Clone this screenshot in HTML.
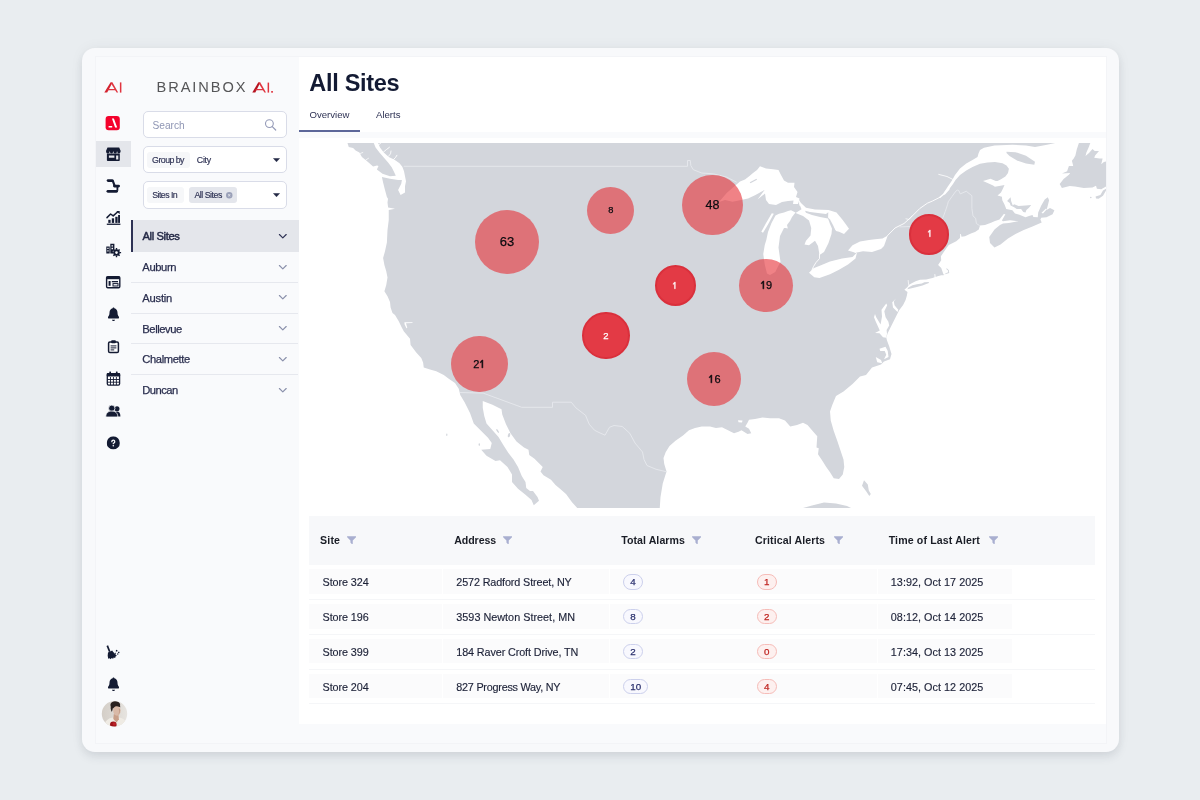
<!DOCTYPE html>
<html lang="en">
<head>
<meta charset="utf-8">
<title>All Sites</title>
<style>
*{box-sizing:border-box;margin:0;padding:0}
html,body{width:1200px;height:800px;overflow:hidden}
body{background:#e9edf0;font-family:"Liberation Sans",sans-serif;color:#1d2340;position:relative}
#wrap{position:absolute;left:0;top:0;width:1200px;height:800px;will-change:transform}
.abs{position:absolute}
#card{left:82px;top:48px;width:1037px;height:704px;border-radius:13px;background:#f8f9fb;box-shadow:0 5px 10px rgba(40,50,70,.10),0 0 14px rgba(40,50,70,.05)}
#frame{left:95px;top:56px;width:1012px;height:688px;background:#f9fafc;border:1px solid #f3f4f7}
#rail-active{left:96px;top:140.5px;width:35px;height:26.5px;background:#e4e6eb}
#logo{left:156.5px;top:78.6px;font-size:14.6px;letter-spacing:1.95px;color:#555557;white-space:nowrap;line-height:16px}
.box{position:absolute;left:143px;width:143.5px;height:27px;border:1px solid #d9dce8;border-radius:5px;background:#fff}
.chip{-webkit-text-stroke:.15px #2e3254;position:absolute;height:15.5px;border-radius:3px;font-size:8px;line-height:17.6px;color:#2e3254;white-space:nowrap;text-align:left}
.sline{position:absolute;left:131px;width:167px;height:1px;background:#e6e8ee}
#head{left:298.6px;top:57px;width:807.6px;height:75px;background:#fff}
#body{left:298.6px;top:137.6px;width:807.6px;height:586.4px;background:#fff}
#title{left:309.3px;top:68.5px;font-size:23.5px;font-weight:bold;color:#131a33;line-height:28px;white-space:nowrap;letter-spacing:-.3px}
.tab{position:absolute;top:108.5px;font-size:9.6px;line-height:12px;color:#2e3254;white-space:nowrap}
#map{left:298px;top:143px;width:808px;height:365px;overflow:hidden}
.c{position:absolute;border-radius:50%;text-align:center;font-size:11px;color:#0c0c10;-webkit-text-stroke:.25px currentColor}
#thead{left:309px;top:516.2px;width:786px;height:48.7px;background:#f7f8fa}
.th{position:absolute;top:534px;font-size:10.6px;font-weight:bold;color:#1a1d26;line-height:13px;white-space:nowrap}
.cell{position:absolute;height:24.4px;background:#fbfbfc}
.rl{position:absolute;left:309px;width:786px;height:1px;background:#f5f6f8}
.td{-webkit-text-stroke:.15px #1d2238;position:absolute;font-size:11px;color:#1d2238;line-height:13px;white-space:nowrap}
.bd{position:absolute;height:15.6px;border-radius:8px;font-size:9.8px;line-height:13.8px;text-align:center;-webkit-text-stroke:.25px currentColor}
.bb{border:1px solid #ccd0ec;background:#f8f8fe;color:#2b316e}
.br{border:1px solid #f6bcb8;background:#fdf0ef;color:#bf2420}
</style>
</head>
<body>
<div id="wrap">
<div id="card" class="abs"></div>
<div id="frame" class="abs"></div>
<div id="rail-active" class="abs"></div>
<div id="rail">
<svg class="abs" style="left:95px;top:56px" width="40" height="688" viewBox="95 56 40 688">
<g>
<path d="M104.3 92.6 L110.5 82.4 L112.5 82.4 L107.2 92.6 Z" fill="#d3222f"/>
<path d="M110.5 82.4 L112.5 82.4 L118.2 92.6 L116.6 92.6 Z" fill="#e0343f"/>
<path d="M107.6 89.0 L115.4 89.0 L116.0 90.2 L106.9 90.2 Z" fill="#e0343f"/>
<rect x="119.9" y="82.4" width="1.5" height="10.2" fill="#e0343f"/>
</g>
<rect x="105.6" y="116" width="14.2" height="14.2" rx="3" fill="#f4022c"/>
<path d="M108.6 126.1h3.6v1.5h-3.6z M111.9 118.6h2.0l3.3 9h-2.1z" fill="#fff"/>
<g fill="#141b33">
<path d="M107.5 147.4H119.2L120.7 151.0A1.84 2.6 0 0 1 117.03 151.0A1.84 2.6 0 0 1 113.35 151.0A1.84 2.6 0 0 1 109.68 151.0A1.84 2.6 0 0 1 106 151.0Z"/>
<path d="M106.9 153.5h12.9v6.4c0 .7-.5 1.200-1.200 1.200h-10.500c-.7 0-1.200-.5-1.200-1.200z M108.9 155.600v2.100h5.500v-2.100z M116.100 155.600v3.800h2.200v-3.800z" fill-rule="evenodd"/>
</g>
<g fill="none" stroke="#141b33" stroke-width="2.8" stroke-linecap="round" stroke-linejoin="round">
<path d="M108.1 180.6H112.2"/><path d="M114.4 186.1H118.6"/><path d="M107.9 191.3H116.6"/>
<path d="M112.9 181.2L114.4 185.2" stroke-width="2.2"/><path d="M117.4 186.8V190.8" stroke-width="1.8" stroke-linecap="butt"/>
</g>
<g fill="#141b33">
<rect x="106.800" y="223.600" width="13.600" height="1.300"/>
<rect x="108.300" y="219.800" width="2.300" height="3.100"/>
<rect x="111.800" y="218.300" width="2.300" height="4.600"/>
<rect x="115.300" y="216.800" width="2.300" height="6.100"/>
<rect x="118.100" y="215.000" width="1.900" height="7.900"/>
<path d="M107.0 217.600l3.600-3.600 2.600 1.900 4.600-4.100" fill="none" stroke="#141b33" stroke-width="1.500" stroke-linejoin="round" stroke-linecap="round"/>
<path d="M116.300 210.900h3.400v3.400z"/>
</g>
<g fill="#141b33">
<path d="M106.300 246.600h3.400v6.800h-3.400z M107.300 247.800v1.300h1.300v-1.300z M107.300 250.200v1.300h1.300v-1.300z" fill-rule="evenodd"/>
<path d="M110.300 243.800h4.100v6.000l-1.600 1.400v2.200h-2.500z M111.500 245.200v1.400h1.500v-1.400z M111.500 247.800v1.400h1.500v-1.400z" fill-rule="evenodd"/>
<circle cx="116.500" cy="252.600" r="2.300" fill="none" stroke="#141b33" stroke-width="1.900"/>
<path d="M115.800 248.000h1.400v1.800h-1.400z M115.800 255.400h1.400v1.800h-1.400z M111.900 251.900h1.800v1.400h-1.800z M119.300 251.900h1.800v1.400h-1.800z" />
<path d="M112.900 249.900l1.000-1.000 1.300 1.300-1.000 1.000z M119.100 248.900l1.000 1.000-1.300 1.300-1.000-1.000z M112.900 255.300l1.300-1.300 1.000 1.000-1.300 1.300z M120.100 255.300l-1.000 1.000-1.300-1.300 1.000-1.000z"/>
</g>
<g>
<rect x="106.600" y="276.600" width="13.200" height="11.200" rx="1.200" fill="none" stroke="#141b33" stroke-width="1.400"/>
<rect x="106.600" y="276.600" width="13.200" height="2.600" fill="#141b33"/>
<rect x="108.600" y="281.000" width="2.000" height="4.800" fill="#141b33"/>
<rect x="111.800" y="281.000" width="6.200" height="1.300" fill="#141b33"/>
<rect x="113.000" y="283.600" width="5.000" height="2.400" fill="none" stroke="#141b33" stroke-width="1.000"/>
</g>
<svg x="107.9" y="307.2" width="11.2" height="13.8" viewBox="0 0 448 512" preserveAspectRatio="none" ><path fill="#141b33" d="M224 0c-17.7 0-32 14.3-32 32v3.2C119 50 64 114.6 64 192v21.7c0 48.1-16.4 94.8-46.4 132.4l-9.8 12.2C2.7 364.6 0 372.4 0 380.5 0 400.1 15.9 416 35.5 416h376.9c19.6 0 35.5-15.9 35.5-35.5 0-8.1-2.7-15.9-7.8-22.2l-9.8-12.2c-29.9-37.6-46.3-84.3-46.3-132.4V192c0-77.4-55-142-128-156.8V32c0-17.7-14.3-32-32-32m-62 464c7.1 27.6 32.2 48 62 48s54.9-20.4 62-48z"/></svg>
<g>
<rect x="108.600" y="342.000" width="9.800" height="10.600" rx="1.300" fill="#fff" stroke="#141b33" stroke-width="1.500"/>
<rect x="111.200" y="340.200" width="4.600" height="3.000" rx="0.800" fill="#141b33"/>
<rect x="110.600" y="345.400" width="5.800" height="1.000" fill="#141b33"/>
<rect x="110.600" y="347.400" width="5.800" height="1.000" fill="#141b33"/>
<rect x="110.600" y="349.400" width="3.600" height="1.000" fill="#141b33"/>
</g>
<g>
<rect x="107.300" y="373.600" width="12.300" height="11.500" rx="1.300" fill="#fff" stroke="#141b33" stroke-width="1.300"/>
<rect x="106.700" y="373.000" width="13.500" height="3.600" rx="1.000" fill="#141b33"/>
<rect x="109.300" y="371.600" width="1.700" height="2.600" rx=".5" fill="#141b33"/><rect x="115.900" y="371.600" width="1.700" height="2.600" rx=".5" fill="#141b33"/>
<path d="M107.500 379.500h12M107.500 382.200h12M110.500 377v8M113.450 377v8M116.400 377v8" stroke="#141b33" stroke-width=".9" fill="none"/>
</g>
<g fill="#141b33">
<circle cx="117.000" cy="408.800" r="2.500"/>
<path d="M113.500 416.600c0-3.400 1.500-5.000 3.600-5.000s3.300 1.600 3.300 5.000z"/>
<g stroke="#f9fafc" stroke-width=".8"><circle cx="111.800" cy="408.300" r="3.200"/>
<path d="M105.800 417.000c0-4.000 2.300-5.900 6.000-5.900s6.000 1.900 6.000 5.900z"/></g>
</g>
<svg x="106.7" y="436.3" width="13.2" height="13.2" viewBox="0 0 512 512" preserveAspectRatio="none" ><path fill="#141b33" d="M256 512a256 256 0 1 0 0-512 256 256 0 1 0 0 512m0-336c-17.7 0-32 14.3-32 32 0 13.3-10.7 24-24 24s-24-10.7-24-24c0-44.2 35.8-80 80-80s80 35.8 80 80c0 47.2-36 67.2-56 74.5v3.8c0 13.3-10.7 24-24 24s-24-10.7-24-24v-8.1c0-20.5 14.8-35.2 30.1-40.2 6.4-2.1 13.2-5.5 18.2-10.3 4.3-4.2 7.7-10 7.7-19.6 0-17.7-14.3-32-32-32zm-32 192a32 32 0 1 1 64 0 32 32 0 1 1-64 0"/></svg>
<g fill="#141b33">
<path d="M106.500 645.900l1.600-.7 2.400 6.200-1.600.7z"/>
<path d="M108.000 652.400l4.200-1.900 .8 1.300 3.800 4.000-1.300.7-.3 1.400-1.500-.5-.6 1.300-1.500-.6-.9 1.100-1.100-.9-1.400.4-.5-3.000z"/>
<rect x="115.900" y="650.000" width="1.500" height="1.500" transform="rotate(20 116.6 650.700)"/><rect x="118.100" y="651.800" width="1.300" height="1.300"/><rect x="117.100" y="653.400" width="1.200" height="1.200"/><rect x="114.900" y="652.800" width="1.000" height="1.000"/>
</g>
<svg x="107.9" y="677.2" width="11.2" height="13.8" viewBox="0 0 448 512" preserveAspectRatio="none" ><path fill="#141b33" d="M224 0c-17.7 0-32 14.3-32 32v3.2C119 50 64 114.6 64 192v21.7c0 48.1-16.4 94.8-46.4 132.4l-9.8 12.2C2.7 364.6 0 372.4 0 380.5 0 400.1 15.9 416 35.5 416h376.9c19.6 0 35.5-15.9 35.5-35.5 0-8.1-2.7-15.9-7.8-22.2l-9.8-12.2c-29.9-37.6-46.3-84.3-46.3-132.4V192c0-77.4-55-142-128-156.8V32c0-17.7-14.3-32-32-32m-62 464c7.1 27.6 32.2 48 62 48s54.9-20.4 62-48z"/></svg>
<defs><clipPath id="av"><circle cx="114.5" cy="713.7" r="12.7"/></clipPath>
<linearGradient id="avbg" x1="0" x2="1"><stop offset="0" stop-color="#d3cdc6"/><stop offset=".55" stop-color="#dedad5"/><stop offset="1" stop-color="#e9e6e2"/></linearGradient></defs>
<g clip-path="url(#av)">
<rect x="101" y="700" width="28" height="28" fill="url(#avbg)"/>
<path d="M104 728c0-6.500 3.500-9.600 8.600-10.600l3.600 2.600 3.300-2.400c4.800 1.000 7.800 4.400 7.800 10.400z" fill="#efebe4"/>
<path d="M113.800 714.000h4.600l.5 5.200-2.400 3.300-3.200-3.500z" fill="#c9a08a"/>
<ellipse cx="115.300" cy="704.900" rx="4.900" ry="3.700" fill="#2a2220"/>
<path d="M111.300 705.000c-1.000 2.000-.8 5.000.6 7.000l1.300-5.000z" fill="#2a2220"/>
<ellipse cx="116.900" cy="710.700" rx="3.700" ry="5.000" fill="#d9b9a7"/>
<path d="M112.600 707.000c1.000-3.000 6.500-3.500 8.000.3-2.600-1.300-5.300-1.400-8.000-.3z" fill="#2a2220"/>
<path d="M118.600 708.500c.8 1.600.8 4.500-.6 6.600 1.800-1.300 2.600-4.000 1.900-6.000z" fill="#c39d88"/>
<circle cx="113.300" cy="724.800" r="3.300" fill="#9c1218"/>
<circle cx="114.300" cy="723.900" r="1.700" fill="#bb2026"/>
</g>
</svg>
</div>
<div id="side">
<div id="logo" class="abs">BRAINBOX</div>
<svg class="abs" style="left:250px;top:78px" width="28" height="18" viewBox="250 78 28 18">
<path d="M252.300 92.600 L258.200 82.600 L260.300 82.600 L255.300 92.600 Z" fill="#b5121f"/>
<path d="M258.200 82.600 L260.300 82.600 L266.000 92.600 L264.400 92.600 Z" fill="#e0343f"/>
<path d="M255.800 89.000 L263.200 89.000 L263.900 90.200 L255.100 90.200 Z" fill="#e0343f"/>
<rect x="267.600" y="82.600" width="1.500" height="10.000" fill="#e0343f"/>
<rect x="271.200" y="91.000" width="1.700" height="1.700" fill="#e0343f"/>
</svg>
<div class="box" style="top:111px"></div>
<div class="abs" style="left:152.600px;top:118.500px;font-size:10.2px;line-height:13px;color:#8f96b4;letter-spacing:-.05px">Search</div>
<svg class="abs" style="left:264px;top:118px" width="14" height="14" viewBox="0 0 14 14"><circle cx="5.400" cy="5.600" r="3.900" fill="none" stroke="#959bb8" stroke-width="1.100"/><path d="M8.300 8.600l3.400 3.400" stroke="#959bb8" stroke-width="1.200" stroke-linecap="round"/></svg>
<div class="box" style="top:146px;height:27.400px"></div>
<div class="chip" style="left:147px;top:152.300px;width:43px;background:#f6f7f9;padding-left:5.100px;font-size:8.8px;letter-spacing:-0.542px">Group by</div>
<div class="chip" style="left:196.800px;top:152.300px;font-size:8.8px;letter-spacing:-0.252px">City</div>
<svg class="abs" style="left:272.900px;top:157.8px" width="7" height="4.500" viewBox="0 0 7 4.5"><path d="M0.500 0.500h6l-3 3.300z" fill="#232845" stroke="#232845" stroke-width=".5" stroke-linejoin="round"/></svg>
<div class="box" style="top:181px;height:27.500px"></div>
<div class="chip" style="left:147px;top:187.300px;width:36.500px;background:#f6f7f9;padding-left:5.200px;font-size:8.8px;letter-spacing:-0.55px">Sites In</div>
<div class="chip" style="left:189px;top:187.300px;width:47.500px;background:#e4e6ec;padding-left:5.400px;font-size:8.8px;letter-spacing:-0.486px">All Sites</div>
<svg class="abs" style="left:226.400px;top:192.200px" width="6.500" height="6.500" viewBox="0 0 512 512"><path fill="#9aa0b8" d="M256 512a256 256 0 1 0 0-512 256 256 0 1 0 0 512m-89-345c9.4-9.4 24.6-9.4 33.9 0l55 55 55-55c9.4-9.4 24.6-9.4 33.9 0s9.4 24.6 0 33.9l-55 55 55 55c9.4 9.4 9.4 24.6 0 33.9s-24.6 9.4-33.9 0l-55-55-55 55c-9.4 9.4-24.6 9.4-33.9 0s-9.4-24.6 0-33.9l55-55-55-55c-9.4-9.4-9.4-24.6 0-33.9"/></svg>
<svg class="abs" style="left:272.900px;top:193.0px" width="7" height="4.500" viewBox="0 0 7 4.5"><path d="M0.500 0.500h6l-3 3.300z" fill="#232845" stroke="#232845" stroke-width=".5" stroke-linejoin="round"/></svg>
<div class="abs" style="left:131px;top:220.400px;width:167.6px;height:31.200px;background:#e4e6eb"></div>
<div class="abs" style="left:131px;top:220.400px;width:2.300px;height:31.200px;background:#2e3254"></div>
<div class="abs" style="left:142.5px;top:229px;font-size:11.2px;letter-spacing:-0.382px;line-height:14px;white-space:nowrap;color:#2e3254;color:#232845;-webkit-text-stroke:.45px #232845;">All Sites</div>
<svg class="abs" style="left:277.500px;top:232.5px" width="10" height="7" viewBox="0 0 10 7"><path d="M1.400 1.500l3.400 3.400 3.400-3.400" fill="none" stroke="#2e3254" stroke-width="1.150" stroke-linecap="round" stroke-linejoin="round"/></svg>
<div class="abs" style="left:142.3px;top:260px;font-size:11.2px;letter-spacing:-0.363px;line-height:14px;white-space:nowrap;color:#2e3254;-webkit-text-stroke:.25px #2a2e4e;color:#2a2e4e;">Auburn</div>
<svg class="abs" style="left:277.500px;top:263.5px" width="10" height="7" viewBox="0 0 10 7"><path d="M1.400 1.500l3.400 3.400 3.400-3.400" fill="none" stroke="#8a90ab" stroke-width="1.150" stroke-linecap="round" stroke-linejoin="round"/></svg>
<div class="abs" style="left:142.3px;top:291px;font-size:11.2px;letter-spacing:-0.226px;line-height:14px;white-space:nowrap;color:#2e3254;-webkit-text-stroke:.25px #2a2e4e;color:#2a2e4e;">Austin</div>
<svg class="abs" style="left:277.500px;top:294.3px" width="10" height="7" viewBox="0 0 10 7"><path d="M1.400 1.500l3.400 3.400 3.400-3.400" fill="none" stroke="#8a90ab" stroke-width="1.150" stroke-linecap="round" stroke-linejoin="round"/></svg>
<div class="abs" style="left:142.3px;top:322px;font-size:11.2px;letter-spacing:-0.423px;line-height:14px;white-space:nowrap;color:#2e3254;-webkit-text-stroke:.25px #2a2e4e;color:#2a2e4e;">Bellevue</div>
<svg class="abs" style="left:277.500px;top:325.0px" width="10" height="7" viewBox="0 0 10 7"><path d="M1.400 1.500l3.400 3.400 3.400-3.400" fill="none" stroke="#8a90ab" stroke-width="1.150" stroke-linecap="round" stroke-linejoin="round"/></svg>
<div class="abs" style="left:142.3px;top:352px;font-size:11.2px;letter-spacing:-0.381px;line-height:14px;white-space:nowrap;color:#2e3254;-webkit-text-stroke:.25px #2a2e4e;color:#2a2e4e;">Chalmette</div>
<svg class="abs" style="left:277.500px;top:355.8px" width="10" height="7" viewBox="0 0 10 7"><path d="M1.400 1.500l3.400 3.400 3.400-3.400" fill="none" stroke="#8a90ab" stroke-width="1.150" stroke-linecap="round" stroke-linejoin="round"/></svg>
<div class="abs" style="left:142.3px;top:383px;font-size:11.2px;letter-spacing:-0.521px;line-height:14px;white-space:nowrap;color:#2e3254;-webkit-text-stroke:.25px #2a2e4e;color:#2a2e4e;">Duncan</div>
<svg class="abs" style="left:277.500px;top:386.5px" width="10" height="7" viewBox="0 0 10 7"><path d="M1.400 1.500l3.400 3.400 3.400-3.400" fill="none" stroke="#8a90ab" stroke-width="1.150" stroke-linecap="round" stroke-linejoin="round"/></svg>
<div class="sline" style="top:282.3px"></div>
<div class="sline" style="top:313.2px"></div>
<div class="sline" style="top:343.3px"></div>
<div class="sline" style="top:374px"></div>
</div>
<div id="head" class="abs"></div>
<div id="body" class="abs"></div>
<div id="title" class="abs">All Sites</div>
<div class="tab" style="left:309.5px">Overview</div>
<div class="tab" style="left:376px">Alerts</div>
<div class="abs" style="left:298.6px;top:130.3px;width:61.4px;height:1.7px;background:#5d6799"></div>
<div id="map" class="abs">
<svg width="808" height="365" viewBox="298 143 808 365" style="display:block">
<g fill="#d3d6dc">
<polygon points="378.1,143 1055.25,143 1047,144.75 1035,147 1026,145.5 1012.5,144.75 994.5,145.5 984,147.75 980,150 978.5,153.5 977.5,157 972.5,160 966.25,163.5 960,168.5 955,175 952,180.5 947.5,187 944,192.5 948.5,190 953,184 955.5,180 960,175 966.25,170.6 972.5,166.9 980,163.75 987.5,162.5 995,161.9 1002.5,163.3 1006.5,165.5 1008.9,168.75 1008,173.1 1005.4,176.6 1001,179.25 997.5,181 995.75,181 990.5,178.8 983,181 987,182.75 993.1,185.4 994.9,186.7 1001.9,185.4 1004.5,184.9 1003.2,188 1001,192.4 997.5,195.4 1001.9,196.75 1002.3,200.25 1004.5,204.6 1006.25,209 1012.4,210.3 1015,213.4 1019.4,214.7 1025.5,217.3 1029,216 1032.5,215.1 1033.4,216.9 1037.75,217.3 1038.2,212.5 1041.25,205.5 1044.75,199.4 1047.8,197.2 1049.1,200.25 1047.8,205.5 1046.5,209.9 1050,208.1 1054.4,210.3 1052.6,214.25 1046.5,217.3 1041.25,217.75 1040.4,219.5 1041.7,222.6 1032.5,226.5 1023.75,230 1015.5,234 1008,238.5 1000.5,244.5 994.5,247.5 990,243 989.25,237 994.5,229.5 1000,225 1003,223.4 1008.9,223 1018.5,221.25 1010,220.3 1003,221.2 1001.9,220.4 1005.4,214.25 1003.8,214 999.5,219.5 995,221 991,222.75 985,225 980,225.6 978.75,229.4 975,231.9 971.5,233.3 968.75,234.4 965,236.25 961.5,236.8 960.9,233.9 960.2,234 960,238.1 956.25,241.25 951.25,243.75 948.75,245 946.9,247.5 943.75,251.9 940.9,256.25 941.2,260.3 938.1,265 941.25,268.1 942.8,272.5 943.5,274.4 946,274 949.2,273 948.9,270.2 946.8,268.2 946.2,268.9 948,270.6 948.2,272.3 945.8,273.2 943.6,275.2 941.25,275.2 937.5,276.25 935.6,277 935.2,274 934.5,274 934.6,277.3 932.5,278.1 926.25,279.4 920,279.7 915.6,281.25 911.25,283.4 908.75,285 907.5,286.9 904.4,289.7 907.5,291.9 906.9,295.6 905.6,300 903.1,305 899,310.5 896,316.5 892.25,324 887.75,333 886.25,337.5 887,340.5 889.25,346.5 891.5,354 890,359.25 884,361.5 881,364.5 872,367.5 866,375 860,376.5 852.5,384 843.5,391.5 836,396 832.25,405 830,411.5 830.75,420.5 833.75,431 837.5,441.5 840.5,450.5 843.5,459.5 844.25,467 842.75,474.5 839,479 833.75,478.25 830,472.25 826.25,467 822.5,461 818,454.25 818.75,448.25 816.5,447.5 817.25,436.25 812,430.25 807.5,425 803,422.75 797,425 790.25,426.5 785,420.5 779,418.25 770,418.25 762.5,417.5 755,419 749,419.75 747.5,422.75 745.25,426.5 749,428.75 751.25,433.25 747.5,434 741.5,430.25 738.5,431.75 734,433.25 728,430.25 722,427.25 716,428 710,426.5 701.75,426.5 695,428 689,430.25 683,435.5 675.5,440.75 669.5,446 665.75,452 663.5,458 664.25,464 666.5,471.5 662.75,483.5 660.5,497 659.75,508 577.25,508 572,502.25 566,494 560,488.75 555.5,485 551,479.75 543.5,475.25 540.5,471.5 542.75,467 539,463.25 534.5,458.75 529.25,455 528.5,449.75 524,447.5 516.5,441.5 510.5,433.25 506,424.25 502.25,414.5 501.5,409.25 492.5,404.75 482.75,401 482.75,407.75 484.25,416 486.5,423.5 492.5,430.25 498.5,437 503,444.5 508.25,452.75 513.5,459.5 518,467 521.75,476 525.5,482 526.25,488 530,491 533,491 537.5,497 539,500.75 533.75,505.25 531.5,500 525.5,494.75 518,488.75 512,482 512,474.5 507.5,467 500,460.25 495.5,461 486.5,455.75 481.25,449.75 490.25,449 491.75,443 488,437.75 480.5,430.25 473.75,423.5 470,413 464.75,402.5 460.25,395 458.75,388.75 455,383.1 448.75,378.75 443.75,375 436.25,371.25 430,369.4 423.75,367.5 423.1,362.5 421.25,358.1 416.25,352.5 410.6,345 410,338.75 403.75,331.25 401.5,327 398.75,321.25 395,315 392.5,313.1 390.6,307.5 390,301.9 387.5,296.25 384.4,291.25 386.25,285 387.5,277.5 386.25,271.25 384.4,265 383.1,258.1 385,251.25 386.9,242.5 387.5,230 388.75,220 388.75,210 395,208.75 388.1,207.5 387.5,202.5 388,198.75 386.9,196.9 385,190 383.1,182.5 381.9,176.9 390,178.75 398.1,180 401.9,180 401.25,183.75 398.1,190 400.6,195 405,192.5 405,186.25 406,181.25 405,176.25 404,171.25 402.3,166.7 399.5,163.3 394.5,159.7 388.75,156.9 383.75,152.5 380,147.5"/>
<polygon points="347.5,143 373.75,143 375.6,147.5 379.4,152.5 383.75,157.5 388.5,163 391.7,167.3 394.2,172.3 395.8,175.8 390,176.25 382.5,173.75 376.9,169.6 378.5,166 377,165.5 373.1,166.6 370,163.75 366.25,160.6 361.9,156.9 359.4,152.5 355.6,150.6 353.1,148.1 348.75,146.9"/>
<polygon points="907.3,289.2 908.4,287.5 912.5,285.2 916.9,284.3 921.9,283.6 924.4,282.2 928.75,282 928.9,282.9 926.25,283.9 922.5,285.4 916.9,287 910.6,288.5"/>
<polygon points="1007.1,201.1 1010.6,197.2 1011.1,201.1 1012.8,205.5 1014.1,204.2 1018.5,205.9 1025.5,205.5 1031.2,205.1 1029,207.7 1026.4,209.9 1025.5,212.5 1023.3,212.1 1021.1,209 1016.75,209 1014.1,207.25 1010.6,205.5 1009.75,202.9"/>
<polygon points="1006.5,151.8 1015.5,152.2 1026,155.8 1035,161.8 1034.3,164.7 1026,163.5 1017,160.5 1009.5,156 1006.5,153"/>
<polygon points="1078.9,143 1090.3,143 1088.6,147.6 1086.4,152.4 1085.5,155.9 1089,152.9 1092.5,148.9 1094.7,151.1 1099,151.1 1095.1,155.5 1094.25,157.7 1099.5,158.6 1102.6,158.6 1101.25,164.25 1103.9,162 1106,161.6 1106,186.6 1101.25,189.2 1096.9,188.75 1096,185.7 1092.5,187.4 1083.75,187.9 1075,186.6 1069.75,186.1 1061.9,187.9 1059.7,183.9 1063.6,179.1 1068.9,174.75 1070.2,173 1061.9,173.4 1067.1,171.25 1068.9,166 1073.25,166 1071.9,160.75 1073.7,158.6 1075.4,155.5 1076.75,149.4"/>
<polygon points="1095.6,196.6 1100.4,194.9 1103,190.5 1106,188.75 1106,190.5 1103,195.75 1098.6,198.8 1096,198.4"/>
<polygon points="803,508 812,505.5 824,502.5 836,503.5 847,506 851,508"/>
<polygon points="864,480.2 867.8,484.5 868.8,490.5 870.8,494 869.3,496 866.3,491.5 862,485.75"/>
<ellipse cx="509" cy="435.2" rx="1.1" ry="2.2" transform="rotate(15 509 435.2)"/><ellipse cx="497.6" cy="431" rx=".7" ry="2.2" transform="rotate(-35 497.6 431)"/><ellipse cx="479.3" cy="444.6" rx=".7" ry="1.4"/><ellipse cx="446.8" cy="434.8" rx=".6" ry="1.2"/><circle cx="1090.8" cy="197.5" r=".8"/>
</g>
<g fill="#fff">
<polygon points="719,202 726.7,193 733,187.5 740,181.5 745,179.5 749.5,176 753,173 757,170 760,166.2 766,168.5 773,169.2 778.5,170 781,175 784,180.5 788,182.8 794.5,182.8 794,187 797.5,192 796,197 799.5,198.5 798,204 793,204 793.5,200.5 788,201 782,202 776,205 769,204 766,200 765,193.5 757.5,199.5 764.5,190 755,195.2 748,198.5 740,200.3 732.5,201.75 725,200"/>
<polygon points="788,211 791,210.3 795.5,212.6 792,217 790,221 787,225 787.8,228.5 785.6,228 784,228 780,236 778.5,247.5 779.75,256.5 780.5,262 778.25,266 775.25,272 770,275 767,273.5 764.75,264.5 763.25,254 764.75,245 766.3,240 768,232 771.5,223 775.5,215.5 779,213.8 784,212.6"/>
<polygon points="771.8,213.3 773.8,213.8 768,224.5 763,232.8 761.3,231.8 765.8,223.5"/>
<polygon points="795.5,213 801.5,209.25 800,205.5 798.5,199.5 801,203 806,207.75 815,209.5 828.5,210 836.5,212.5 842.3,219.5 846,224.5 849,228.75 844,234 839,231.75 836,231 832.25,225.5 831.5,234 828.5,243 824,252 819.5,255 818,246 815,240.75 809,245.25 804.5,244.5 806,240.75 810.5,235.5 811.25,228 809,220.5 803,216"/>
<polygon points="809,272.75 813.5,268.25 821,265.25 830,261.5 842,258.5 852.5,257 857,252.5 855.5,258.5 848,264.5 839,269.75 830,274.25 819.5,278 814.25,277.25"/>
<polygon points="848,250.5 852.5,245.25 860,241.5 869,240 875,239.25 882.5,238.5 887.75,235.5 884,246 881,249 872,252 863,251.25 855.5,252.75"/>
<polygon points="404.4,322.2 412.5,322.2 412.5,323 406,323.2 407.3,328 406.5,328.3 404.6,324.5"/>
<polygon points="886.25,337.8 883,337.3 879.5,333.3 875,332.9 879.8,330.6 875.6,321.3 874,317.25 875,314 876.2,317.25 880.6,324.5 882,316.5 881.5,309.75 886.25,303.5 887.2,305.25 884.3,311.25 885.6,317.25 888.4,321.75 889.2,325.5 886.6,330 887,333.75"/>
<polygon points="896,298.5 892.25,302.25 893,307.5 897.5,312 898.25,309.75 894.5,305.25 893.75,301.5"/>
<polygon points="879.5,348.75 885.5,346.8 887.75,351 888.5,357 884,359.25 886.25,354.75 884.75,351 880.25,351"/>
<polygon points="875.75,357 881,360 882.2,363.3 877.25,362.25"/>
<polygon points="738,420.3 742.5,420.5 742,422.5 738.5,422.3"/>
<polygon points="1041.5,212.8 1046,208.5 1046.8,209.3 1043,213.6"/>
</g>
<g fill="#d3d6dc">
<polygon points="749.75,182.25 756.5,178.8 757,179.8 750.5,183.2"/>
<polygon points="805,210.7 810,212 818,213 826,214 828.3,212.3 828,218.5 820,217 812,215 806,212.8"/>
<polygon points="827.5,217 830,219.5 833.5,226 835.5,231 833,231 830,224"/>
</g>
<g fill="none" stroke="#fff" stroke-linecap="round" stroke-linejoin="round">
<polyline stroke-width="0.9" points="887.5,235.6 895,228 904,223.5 910.75,217.5 915.25,213 919.75,208.5 927.25,203.25 932.5,201 940,197.25"/>
<polyline stroke-width="1.5" points="940,197.25 944.5,193.5"/>
<polyline stroke-width="2.2" points="944.5,193.5 948.5,189"/>
<polyline stroke-width="0.7" points="906,218.8 909,219.5 912,216"/>
<polyline stroke-width="0.8" points="953,179.5 947,176.5 938.75,174.4"/>
<polyline stroke-width="0.9" points="819.5,254 819.5,258.5 816,262.5 813.5,266.5 812,270"/>
<polyline stroke-width="0.8" points="856,252.8 853,250.8"/>
<polyline stroke-width="0.9" points="798.5,199.5 800,205.5"/>
<polyline stroke-width="0.9" points="383.5,152 386.5,149.5 389.4,147.3"/>
<polyline stroke-width="0.9" points="393.5,159.5 395.5,157.5 396.9,155.3"/>
<polyline stroke-width="0.8" points="388.5,156.3 390.5,153.8 391,151"/>
<polyline stroke-width="0.8" points="378.3,145 380.5,143.5"/>
<polyline stroke-width="0.7" points="366,159.8 368.5,158.3"/>
<polyline stroke-width="0.7" points="360,153.6 362.8,152.5"/>
<polyline stroke-width="0.7" points="908.6,284.5 908.2,280.5"/>
</g>
<g fill="none" stroke="#e7e9ed" stroke-width="0.9" stroke-linejoin="round">
<polyline points="403.75,166.3 687.5,166.3 687.5,160.5 690.3,160.5 690.8,165.5 693.3,169.7 701.7,173 713.3,173.8 726.7,177.2 736.7,182.2"/>
<polyline points="460,392.5 483.1,393.1 521.75,407.3 552.5,407.3 552.5,402.2 571.25,402.2 575.75,407.75 585.5,415.25 589.25,424.25 594.5,430.25 599,432.5 605,435.2 609.5,427.25 614,425.5 622.25,426.5 629.75,433.25 635,443 642.5,452 644,459.5 647,465.5 656,469.25 666.5,471.8"/>
<polyline points="899.5,226.9 915,226.3 938,225.8 943,217.5 945.25,211.5 947.5,204.75 948.25,201.75 952,196.5 955.75,191.25 957.25,190.1 958.75,190.5 960.25,193.9 966.25,191.25 971.9,195.75 971.9,208.5 973,216 975.6,218.25 976.4,223.5 979.75,225.75"/>
</g>
</svg>
<div class="c" style="left:177px;top:66.75px;width:64px;height:64px;line-height:64px;font-size:13px;background:rgba(230,46,54,.6);color:#0b0b0f;">63</div>
<div class="c" style="left:289.3px;top:43.5px;width:47px;height:47px;line-height:47px;font-size:9.3px;background:rgba(230,46,54,.6);color:#0b0b0f;">8</div>
<div class="c" style="left:384.2px;top:31.9px;width:60.6px;height:60.6px;line-height:60.6px;font-size:12.5px;background:rgba(230,46,54,.6);color:#0b0b0f;">48</div>
<div class="c" style="left:441.1px;top:115.7px;width:53.6px;height:53.6px;line-height:53.6px;font-size:11px;background:rgba(230,46,54,.6);color:#0b0b0f;"><svg style="display:inline-block;vertical-align:baseline;overflow:visible" width="6.12" height="7.88" viewBox="0 0 556 716"><path fill="currentColor" stroke="currentColor" stroke-width="45" stroke-linejoin="round" d="M272 0H350V716H262V160C220 205 165 238 110 258V172C185 140 245 75 272 0Z"/></svg>9</div>
<div class="c" style="left:153px;top:192.7px;width:56.8px;height:56.8px;line-height:56.8px;font-size:11px;background:rgba(230,46,54,.6);color:#0b0b0f;">2<svg style="display:inline-block;vertical-align:baseline;overflow:visible" width="6.12" height="7.88" viewBox="0 0 556 716"><path fill="currentColor" stroke="currentColor" stroke-width="45" stroke-linejoin="round" d="M272 0H350V716H262V160C220 205 165 238 110 258V172C185 140 245 75 272 0Z"/></svg></div>
<div class="c" style="left:389.4px;top:208.6px;width:54px;height:54px;line-height:54px;font-size:11px;background:rgba(230,46,54,.6);color:#0b0b0f;"><svg style="display:inline-block;vertical-align:baseline;overflow:visible" width="6.12" height="7.88" viewBox="0 0 556 716"><path fill="currentColor" stroke="currentColor" stroke-width="45" stroke-linejoin="round" d="M272 0H350V716H262V160C220 205 165 238 110 258V172C185 140 245 75 272 0Z"/></svg>6</div>
<div class="c" style="left:356.5px;top:122.1px;width:41px;height:41px;line-height:37px;font-size:9.5px;background:#e33a45;border:2px solid #da303c;color:#fff;"><svg style="display:inline-block;vertical-align:baseline;overflow:visible" width="5.28" height="6.80" viewBox="0 0 556 716"><path fill="currentColor" stroke="currentColor" stroke-width="45" stroke-linejoin="round" d="M272 0H350V716H262V160C220 205 165 238 110 258V172C185 140 245 75 272 0Z"/></svg></div>
<div class="c" style="left:284.1px;top:168.7px;width:47.8px;height:47.8px;line-height:43.8px;font-size:9.5px;background:#e33a45;border:2px solid #da303c;color:#fff;">2</div>
<div class="c" style="left:610.9px;top:71px;width:40.6px;height:40.6px;line-height:36.6px;font-size:9.5px;background:#e33a45;border:2px solid #da303c;color:#fff;"><svg style="display:inline-block;vertical-align:baseline;overflow:visible" width="5.28" height="6.80" viewBox="0 0 556 716"><path fill="currentColor" stroke="currentColor" stroke-width="45" stroke-linejoin="round" d="M272 0H350V716H262V160C220 205 165 238 110 258V172C185 140 245 75 272 0Z"/></svg></div>
</div><!--/map-->
<div id="table">
<div id="thead" class="abs"></div>
<div class="th" style="left:320px;letter-spacing:0.187px">Site</div>
<svg class="abs" style="left:346.5px;top:535.300px" width="9.200" height="9.200" viewBox="0 0 512 512" preserveAspectRatio="none"><path fill="#a9afd0" d="M32 64C19.1 64 7.4 71.8 2.4 83.8s-2.2 25.7 7 34.8L192 301.3V416c0 8.5 3.4 16.6 9.4 22.6l64 64c9.2 9.2 22.9 11.9 34.9 6.9S320 492.9 320 480V301.3l182.6-182.6c9.2-9.2 11.9-22.9 6.9-34.9S492.9 64 480 64z"/></svg>
<div class="th" style="left:454.2px;letter-spacing:-0.069px">Address</div>
<svg class="abs" style="left:502.8px;top:535.300px" width="9.200" height="9.200" viewBox="0 0 512 512" preserveAspectRatio="none"><path fill="#a9afd0" d="M32 64C19.1 64 7.4 71.8 2.4 83.8s-2.2 25.7 7 34.8L192 301.3V416c0 8.5 3.4 16.6 9.4 22.6l64 64c9.2 9.2 22.9 11.9 34.9 6.9S320 492.9 320 480V301.3l182.6-182.6c9.2-9.2 11.9-22.9 6.9-34.9S492.9 64 480 64z"/></svg>
<div class="th" style="left:621.2px;letter-spacing:0.066px">Total Alarms</div>
<svg class="abs" style="left:691.8px;top:535.300px" width="9.200" height="9.200" viewBox="0 0 512 512" preserveAspectRatio="none"><path fill="#a9afd0" d="M32 64C19.1 64 7.4 71.8 2.4 83.8s-2.2 25.7 7 34.8L192 301.3V416c0 8.5 3.4 16.6 9.4 22.6l64 64c9.2 9.2 22.9 11.9 34.9 6.9S320 492.9 320 480V301.3l182.6-182.6c9.2-9.2 11.9-22.9 6.9-34.9S492.9 64 480 64z"/></svg>
<div class="th" style="left:755px;letter-spacing:0.105px">Critical Alerts</div>
<svg class="abs" style="left:834.1px;top:535.300px" width="9.200" height="9.200" viewBox="0 0 512 512" preserveAspectRatio="none"><path fill="#a9afd0" d="M32 64C19.1 64 7.4 71.8 2.4 83.8s-2.2 25.7 7 34.8L192 301.3V416c0 8.5 3.4 16.6 9.4 22.6l64 64c9.2 9.2 22.9 11.9 34.9 6.9S320 492.9 320 480V301.3l182.6-182.6c9.2-9.2 11.9-22.9 6.9-34.9S492.9 64 480 64z"/></svg>
<div class="th" style="left:888.7px;letter-spacing:0.136px">Time of Last Alert</div>
<svg class="abs" style="left:989.1px;top:535.300px" width="9.200" height="9.200" viewBox="0 0 512 512" preserveAspectRatio="none"><path fill="#a9afd0" d="M32 64C19.1 64 7.4 71.8 2.4 83.8s-2.2 25.7 7 34.8L192 301.3V416c0 8.5 3.4 16.6 9.4 22.6l64 64c9.2 9.2 22.9 11.9 34.9 6.9S320 492.9 320 480V301.3l182.6-182.6c9.2-9.2 11.9-22.9 6.9-34.9S492.9 64 480 64z"/></svg>
<div class="cell" style="left:309px;top:569.4px;width:133px"></div>
<div class="cell" style="left:442.6px;top:569.4px;width:166.9px"></div>
<div class="cell" style="left:610.1px;top:569.4px;width:133.60000000000005px"></div>
<div class="cell" style="left:744.3000000000001px;top:569.4px;width:133.19999999999996px"></div>
<div class="cell" style="left:878.1px;top:569.4px;width:133.60000000000005px"></div>
<div class="rl" style="top:598.9px"></div>
<div class="td" style="left:322.500px;top:576.1px;font-size:10.8px;letter-spacing:-0.073px">Store 324</div>
<div class="td" style="left:456.300px;top:576.1px;font-size:10.8px;letter-spacing:-0.126px">2572 Radford Street, NY</div>
<div class="bd bb" style="left:623.300px;top:574.0px;width:19.5px">4</div>
<div class="bd br" style="left:757px;top:574.0px;width:19.500px">1</div>
<div class="td" style="left:890.800px;top:576.1px;font-size:10.8px;letter-spacing:0.037px">13:92, Oct 17 2025</div>
<div class="cell" style="left:309px;top:604.25px;width:133px"></div>
<div class="cell" style="left:442.6px;top:604.25px;width:166.9px"></div>
<div class="cell" style="left:610.1px;top:604.25px;width:133.60000000000005px"></div>
<div class="cell" style="left:744.3000000000001px;top:604.25px;width:133.19999999999996px"></div>
<div class="cell" style="left:878.1px;top:604.25px;width:133.60000000000005px"></div>
<div class="rl" style="top:633.75px"></div>
<div class="td" style="left:322.500px;top:610.95px;font-size:10.8px;letter-spacing:-0.073px">Store 196</div>
<div class="td" style="left:456.300px;top:610.95px;font-size:10.8px;letter-spacing:0.023px">3593 Newton Street, MN</div>
<div class="bd bb" style="left:623.300px;top:608.85px;width:19.5px">8</div>
<div class="bd br" style="left:757px;top:608.85px;width:19.500px">2</div>
<div class="td" style="left:890.800px;top:610.95px;font-size:10.8px;letter-spacing:0.037px">08:12, Oct 14 2025</div>
<div class="cell" style="left:309px;top:639.1px;width:133px"></div>
<div class="cell" style="left:442.6px;top:639.1px;width:166.9px"></div>
<div class="cell" style="left:610.1px;top:639.1px;width:133.60000000000005px"></div>
<div class="cell" style="left:744.3000000000001px;top:639.1px;width:133.19999999999996px"></div>
<div class="cell" style="left:878.1px;top:639.1px;width:133.60000000000005px"></div>
<div class="rl" style="top:668.6px"></div>
<div class="td" style="left:322.500px;top:645.8000000000001px;font-size:10.8px;letter-spacing:-0.073px">Store 399</div>
<div class="td" style="left:456.300px;top:645.8000000000001px;font-size:10.8px;letter-spacing:-0.11px">184 Raver Croft Drive, TN</div>
<div class="bd bb" style="left:623.300px;top:643.7px;width:19.5px">2</div>
<div class="bd br" style="left:757px;top:643.7px;width:19.500px">0</div>
<div class="td" style="left:890.800px;top:645.8000000000001px;font-size:10.8px;letter-spacing:0.037px">17:34, Oct 13 2025</div>
<div class="cell" style="left:309px;top:673.95px;width:133px"></div>
<div class="cell" style="left:442.6px;top:673.95px;width:166.9px"></div>
<div class="cell" style="left:610.1px;top:673.95px;width:133.60000000000005px"></div>
<div class="cell" style="left:744.3000000000001px;top:673.95px;width:133.19999999999996px"></div>
<div class="cell" style="left:878.1px;top:673.95px;width:133.60000000000005px"></div>
<div class="rl" style="top:703.45px"></div>
<div class="td" style="left:322.500px;top:680.6500000000001px;font-size:10.8px;letter-spacing:-0.073px">Store 204</div>
<div class="td" style="left:456.300px;top:680.6500000000001px;font-size:10.8px;letter-spacing:-0.231px">827 Progress Way, NY</div>
<div class="bd bb" style="left:623.300px;top:678.5500000000001px;width:24.8px">10</div>
<div class="bd br" style="left:757px;top:678.5500000000001px;width:19.500px">4</div>
<div class="td" style="left:890.800px;top:680.6500000000001px;font-size:10.8px;letter-spacing:0.037px">07:45, Oct 12 2025</div>
</div>
</div>
</body>
</html>
